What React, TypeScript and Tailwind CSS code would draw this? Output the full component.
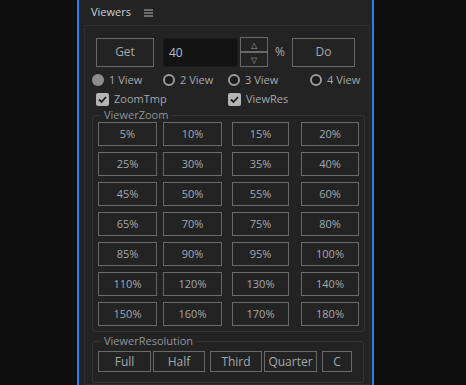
import { useState } from "react";

const zoomRows = [
  ["5%", "10%", "15%", "20%"],
  ["25%", "30%", "35%", "40%"],
  ["45%", "50%", "55%", "60%"],
  ["65%", "70%", "75%", "80%"],
  ["85%", "90%", "95%", "100%"],
  ["110%", "120%", "130%", "140%"],
  ["150%", "160%", "170%", "180%"],
];

// columns in the panel are not evenly spaced
const colCls = [
  "w-[59px]",
  "ml-[6px] w-[59px]",
  "ml-[10px] w-[57px]",
  "ml-[12px] w-[58px]",
];

const resButtons = [
  { label: "Full", cls: "w-[53px]" },
  { label: "Half", cls: "ml-[2px] w-[52px]" },
  { label: "Third", cls: "ml-[5px] w-[52px]" },
  { label: "Quarter", cls: "ml-[2px] w-[53px]" },
  { label: "C", cls: "ml-[5px] w-[30px]" },
];

const views = [
  { label: "1 View", cls: "w-[71px]" },
  { label: "2 View", cls: "w-[65px]" },
  { label: "3 View", cls: "w-[82px]" },
  { label: "4 View", cls: "" },
];

function Radio({ label, checked }: { label: string; checked: boolean }) {
  return (
    <div className="flex items-center gap-[5px] whitespace-nowrap">
      {checked ? (
        <span className="shrink-0 w-[12px] h-[12px] rounded-full bg-[#8c8c8c]" />
      ) : (
        <span className="shrink-0 w-[12px] h-[12px] rounded-full border-2 border-[#9a9a9a] bg-[#1c1c1c]" />
      )}
      <span>{label}</span>
    </div>
  );
}

function Check({ label, className }: { label: string; className: string }) {
  return (
    <div className={`flex items-center gap-[5px] whitespace-nowrap ${className}`}>
      <span className="shrink-0 w-[13px] h-[13px] rounded-[2px] bg-[#b4b4b4] flex items-center justify-center">
        <svg width="11" height="11" viewBox="0 0 11 11">
          <path d="M2 5.5 L4.5 8 L9 3" fill="none" stroke="#1e1e1e" strokeWidth="1.8" />
        </svg>
      </span>
      <span>{label}</span>
    </div>
  );
}

export default function App() {
  const [value, setValue] = useState("40");
  const [view, setView] = useState(0);

  return (
    <div
      className="w-[466px] h-[385px] bg-[#0e0e0e] overflow-hidden text-[11px] text-[#a4a8ad]"
      style={{ fontFamily: '"Open Sans", "Noto Sans", sans-serif' }}
    >
      <div className="ml-[77px] w-[297px] h-[385px] border-x-2 border-[#2680eb] bg-[#232323] flex flex-col">
        <div className="h-[25px] shrink-0 flex items-center pl-[12px] gap-[13px]">
          <span className="text-[11px] text-[#c9d0d8]">Viewers</span>
          <svg width="9" height="8" viewBox="0 0 9 8">
            <path d="M0 1 H9 M0 4 H9 M0 7 H9" stroke="#b8b8b8" strokeWidth="1.2" />
          </svg>
        </div>

        <div className="ml-[5px] w-[286px] flex-1 border border-[#2e2e2e] pt-[11px]">
          <div className="flex items-center pl-[11px]">
            <button className="w-[58px] h-[29px] border border-[#6a6a6a] text-[#a4a8ad] text-[12px]">Get</button>
            <input
              value={value}
              onChange={(e) => setValue(e.target.value)}
              className="ml-[9px] w-[75px] h-[29px] rounded-[3px] bg-[#131313] border border-[#1a1a1a] px-[5px] text-[12px] text-[#aebfd6] outline-none"
            />
            <div className="ml-[2px] flex flex-col">
              <button className="w-[28px] h-[15px] border border-[#6a6a6a] text-[8px] leading-none text-[#a0a0a0]">△</button>
              <button className="w-[28px] h-[15px] border border-[#6a6a6a] text-[8px] leading-none text-[#a0a0a0]">▽</button>
            </div>
            <span className="ml-[7px] text-[12px]">%</span>
            <button className="ml-[7px] w-[63px] h-[29px] border border-[#6a6a6a] text-[#a4a8ad] text-[12px]">Do</button>
          </div>

          <div className="flex items-center pl-[7px] mt-[6px] h-[14px]">
            {views.map((v, i) => (
              <div key={v.label} onClick={() => setView(i)} className={v.cls}>
                <Radio label={v.label} checked={view === i} />
              </div>
            ))}
          </div>

          <div className="flex items-center pl-[11px] mt-[5px] h-[14px]">
            <Check label="ZoomTmp" className="w-[132px]" />
            <Check label="ViewRes" className="" />
          </div>

          <fieldset className="ml-[7px] mt-[3px] w-[272px] border border-[#333333] rounded-[3px] p-0">
            <legend className="ml-[8px] px-[3px] leading-[12px] text-[11px] text-[#8e959c]">ViewerZoom</legend>
            <div className="flex flex-col gap-[6px] mt-[1px] px-[5px] pb-[5px]">
              {zoomRows.map((row, r) => (
                <div key={r} className="flex">
                  {row.map((z, c) => (
                    <button key={z} className={`${colCls[c]} h-[24px] border border-[#6a6a6a] text-[#a4a8ad] text-[11px]`}>
                      {z}
                    </button>
                  ))}
                </div>
              ))}
            </div>
          </fieldset>

          <fieldset className="ml-[7px] mt-[3px] w-[272px] border border-[#333333] rounded-[3px] p-0">
            <legend className="ml-[8px] px-[3px] leading-[12px] text-[11px] text-[#8e959c]">ViewerResolution</legend>
            <div className="flex mt-[4px] px-[5px] pb-[10px]">
              {resButtons.map((b) => (
                <button key={b.label} className={`${b.cls} h-[21px] border border-[#6a6a6a] text-[#a4a8ad] text-[12px]`}>
                  {b.label}
                </button>
              ))}
            </div>
          </fieldset>
        </div>
      </div>
    </div>
  );
}
